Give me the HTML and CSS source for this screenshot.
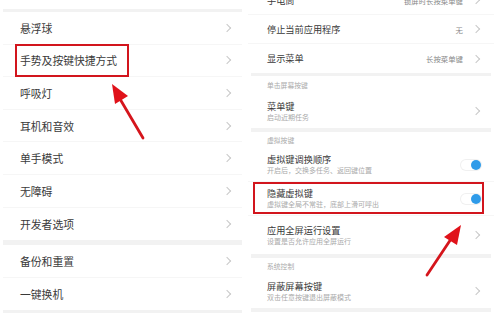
FILE: index.html
```html
<!DOCTYPE html>
<html lang="zh-CN">
<head>
  <meta charset="UTF-8">
  <title>设置</title>
  <link rel="stylesheet" href="styles.css">
</head>
<body>
  <div class="screens">
    <!-- left screen: more settings -->
    <div class="panel left">
      <div class="gap-top"></div>
      <div class="band"></div>
      <div class="row"><span class="title">悬浮球</span><span class="chev"></span></div>
      <div class="row marked">
        <span class="title">手势及按键快捷方式</span><span class="chev"></span>
        <span class="redbox box-left"></span>
      </div>
      <div class="row"><span class="title">呼吸灯</span><span class="chev"></span></div>
      <div class="row"><span class="title">耳机和音效</span><span class="chev"></span></div>
      <div class="row"><span class="title">单手模式</span><span class="chev"></span></div>
      <div class="row"><span class="title">无障碍</span><span class="chev"></span></div>
      <div class="row last"><span class="title">开发者选项</span><span class="chev"></span></div>
      <div class="band thick"></div>
      <div class="row"><span class="title">备份和重置</span><span class="chev"></span></div>
      <div class="row last"><span class="title">一键换机</span><span class="chev"></span></div>
      <div class="band"></div>
    </div>

    <!-- right screen: buttons -->
    <div class="panel right">
      <div class="item first">
        <div class="text"><span class="title">手电筒</span></div>
        <span class="value">锁屏时长按菜单键</span><span class="chev"></span>
      </div>
      <div class="item">
        <div class="text"><span class="title">停止当前应用程序</span></div>
        <span class="value">无</span><span class="chev"></span>
      </div>
      <div class="item last">
        <div class="text"><span class="title">显示菜单</span></div>
        <span class="value">长按菜单键</span><span class="chev"></span>
      </div>
      <div class="band"></div>
      <div class="header">单击屏幕按键</div>
      <div class="item two last">
        <div class="text"><span class="title">菜单键</span><span class="sub">启动近期任务</span></div>
        <span class="chev"></span>
      </div>
      <div class="band small"></div>
      <div class="header short">虚拟按键</div>
      <div class="item two">
        <div class="text"><span class="title">虚拟键调换顺序</span><span class="sub">开启后，交换多任务、返回键位置</span></div>
        <span class="toggle"></span>
      </div>
      <div class="item two marked">
        <div class="text"><span class="title">隐藏虚拟键</span><span class="sub">虚拟键全局不常驻，底部上滑可呼出</span></div>
        <span class="toggle"></span>
        <span class="redbox box-right"></span>
      </div>
      <div class="item two tall last">
        <div class="text"><span class="title">应用全屏运行设置</span><span class="sub">设置是否允许应用全屏运行</span></div>
        <span class="chev"></span>
      </div>
      <div class="band small"></div>
      <div class="header short">系统控制</div>
      <div class="item two last">
        <div class="text"><span class="title">屏蔽屏幕按键</span><span class="sub">双击任意按键退出屏蔽模式</span></div>
        <span class="chev"></span>
      </div>
      <div class="band small"></div>
    </div>
  </div>

  <!-- red annotation arrows -->
  <svg class="arrows" width="494" height="332" viewBox="0 0 494 332">
    <line x1="143" y1="138" x2="120" y2="99" stroke="#d5151c" stroke-width="2.8" stroke-linecap="round"/>
    <polygon points="112,84 128,96 115,104" fill="#e0121a"/>
    <line x1="427" y1="275" x2="451" y2="239" stroke="#d5151c" stroke-width="2.8" stroke-linecap="round"/>
    <polygon points="461,225 457,245 444,237" fill="#e0121a"/>
  </svg>
</body>
</html>
```

FILE: styles.css
```css
/* two phone screenshots side by side */
body {
  margin: 0;
  width: 494px;
  height: 332px;
  overflow: hidden;
  background: #fff;
  font-family: "Noto Sans CJK SC", "Noto Sans", sans-serif;
  color: #333;
  position: relative;
}

.screens {
  display: flex;
  gap: 3px;
}

.panel {
  display: flex;
  flex-direction: column;
  background: #fff;
}

.panel.left {
  width: 245px;
}

.panel.right {
  width: 246px;
}

.gap-top {
  height: 9px;
}

.band {
  height: 3px;
  margin: 0 3px;
  background: #f2f2f2;
}

.band.thick {
  height: 5px;
}

.band.small {
  height: 4px;
}

/* left list rows */
.row {
  position: relative;
  display: flex;
  align-items: center;
  justify-content: space-between;
  height: 32.6px;
  margin: 0 3px;
  padding: 0 12px 0 17px;
  border-bottom: 1px solid #f6f6f6;
  box-sizing: border-box;
}

.row.last {
  border-bottom: none;
}

.row .title {
  font-size: 10.8px;
  color: #3a3a3a;
}

.chev {
  width: 5px;
  height: 5px;
  border-top: 1px solid #c8c8c8;
  border-right: 1px solid #c8c8c8;
  transform: rotate(45deg);
  flex-shrink: 0;
}

/* right list items */
.item {
  position: relative;
  display: flex;
  align-items: center;
  height: 29px;
  padding: 0 15px 0 19px;
  border-bottom: 1px solid #f6f6f6;
  box-sizing: border-box;
}

.item.first {
  margin-top: -14px;
}

.item.last {
  border-bottom: none;
}

.item.two {
  height: 34px;
}

.item.tall {
  height: 38px;
}

.item .text {
  flex: 1;
  display: flex;
  flex-direction: column;
}

.item .title {
  font-size: 9.2px;
  line-height: 11px;
  color: #3a3a3a;
}

.item .sub {
  font-size: 7px;
  line-height: 10px;
  color: #aaa;
}

.item .value {
  font-size: 7.4px;
  color: #888;
  margin-right: 10px;
}

.header {
  height: 18px;
  padding-left: 19px;
  font-size: 6.8px;
  line-height: 18px;
  color: #aaa;
}

.header.short {
  height: 16px;
  line-height: 16px;
}

.toggle {
  position: relative;
  width: 20px;
  height: 10px;
  border-radius: 5px;
  background: #fff;
  box-shadow: 0 0 0 1px #f0f0f0;
  margin-right: -2px;
}

.toggle::after {
  content: "";
  position: absolute;
  right: 0;
  top: 0;
  width: 10px;
  height: 10px;
  border-radius: 50%;
  background: #2f9be9;
}

/* red annotation boxes */
.redbox {
  position: absolute;
  border: 2px solid #d2151d;
  box-sizing: border-box;
}

.box-left {
  left: 12px;
  top: -1px;
  width: 114px;
  height: 33px;
}

.box-right {
  left: 5px;
  top: 0;
  width: 231px;
  height: 32px;
}

.arrows {
  position: absolute;
  left: 0;
  top: 0;
  pointer-events: none;
}
```
